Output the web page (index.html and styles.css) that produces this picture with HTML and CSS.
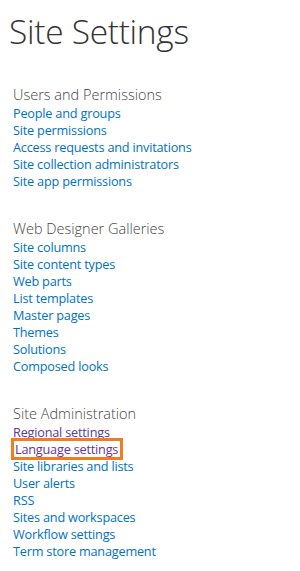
FILE: index.html
```html
<!DOCTYPE html>
<html lang="en">
<head>
    <meta charset="UTF-8">
    <title>Site Settings</title>
    <link rel="stylesheet" href="styles.css">
</head>
<body>

<div class="page">
    <h1 class="page-title">Site Settings</h1>

    <div class="section">
        <h3 class="section-title">Users and Permissions</h3>
        <ul class="links">
            <li><a href="#">People and groups</a></li>
            <li><a href="#">Site permissions</a></li>
            <li><a href="#">Access requests and invitations</a></li>
            <li><a href="#">Site collection administrators</a></li>
            <li><a href="#">Site app permissions</a></li>
        </ul>
    </div>

    <div class="section">
        <h3 class="section-title">Web Designer Galleries</h3>
        <ul class="links">
            <li><a href="#">Site columns</a></li>
            <li><a href="#">Site content types</a></li>
            <li><a href="#">Web parts</a></li>
            <li><a href="#">List templates</a></li>
            <li><a href="#">Master pages</a></li>
            <li><a href="#">Themes</a></li>
            <li><a href="#">Solutions</a></li>
            <li><a href="#">Composed looks</a></li>
        </ul>
    </div>

    <div class="section">
        <h3 class="section-title">Site Administration</h3>
        <ul class="links">
            <li><a href="#" class="visited">Regional settings</a></li>
            <li><a href="#" class="visited highlight">Language settings</a></li>
            <li><a href="#">Site libraries and lists</a></li>
            <li><a href="#">User alerts</a></li>
            <li><a href="#">RSS</a></li>
            <li><a href="#">Sites and workspaces</a></li>
            <li><a href="#">Workflow settings</a></li>
            <li><a href="#">Term store management</a></li>
        </ul>
    </div>
</div>

</body>
</html>
```

FILE: styles.css
```css
body {
    margin: 0;
    background: #fff;
    font-family: 'Open Sans', 'Noto Sans', sans-serif;
}

.page {
    padding: 7px 0 0 9px;
}

.page-title {
    font-size: 33.5px;
    font-weight: 300;
    color: #333;
    margin: 0 0 30px 0;
    line-height: 48px;
    letter-spacing: -0.3px;
}

.section {
    padding-left: 4px;
    margin-bottom: 30px;
}

.section-title {
    font-size: 14.5px;
    font-weight: 300;
    color: #444;
    margin: 0;
    line-height: 19px;
}

.links {
    list-style: none;
    margin: 0;
    padding: 0;
}

.links li {
    line-height: 17px;
    height: 17px;
}

.links a {
    color: #0072c6;
    text-decoration: none;
    font-size: 12.7px;
    letter-spacing: -0.2px;
}

.links a.visited {
    color: #663399;
}

.highlight {
    outline: 3px solid #f47b20;
    outline-offset: -1px;
    padding: 0 3px 0 2px;
}
```
